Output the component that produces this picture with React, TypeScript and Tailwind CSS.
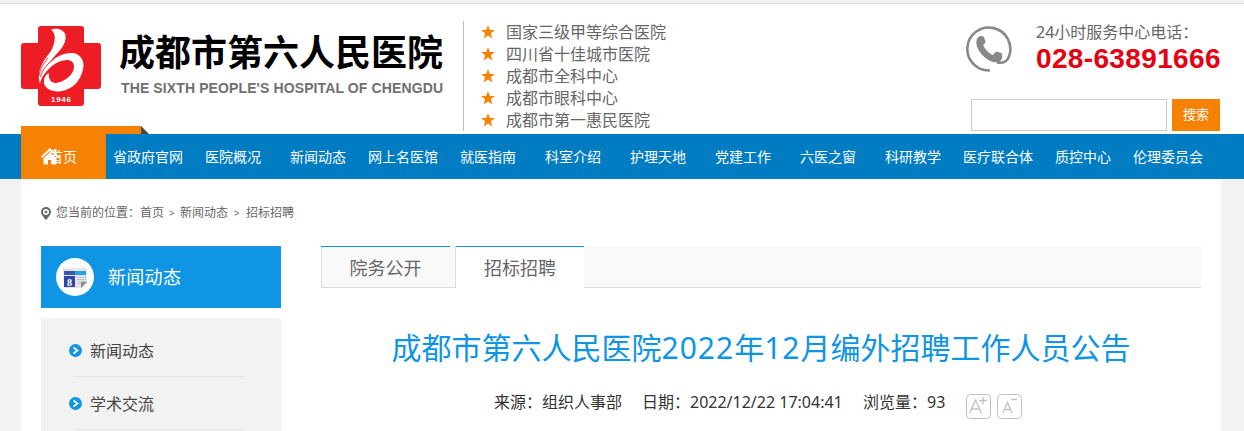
const honors = [
  "国家三级甲等综合医院",
  "四川省十佳城市医院",
  "成都市全科中心",
  "成都市眼科中心",
  "成都市第一惠民医院",
];

const navItems = [
  "省政府官网",
  "医院概况",
  "新闻动态",
  "网上名医馆",
  "就医指南",
  "科室介绍",
  "护理天地",
  "党建工作",
  "六医之窗",
  "科研教学",
  "医疗联合体",
  "质控中心",
  "伦理委员会",
];

const sideItems = ["新闻动态", "学术交流"];

function Logo() {
  return (
    <svg className="mt-[22px] h-20 w-20 shrink-0" viewBox="0 0 80 80">
      <path
        fill="#ee1c24"
        d="M20 0h40q3 0 3 3v14h14q3 0 3 3v40q0 3-3 3H63v14q0 3-3 3H20q-3 0-3-3V63H3q-3 0-3-3V20q0-3 3-3h14V3q0-3 3-3z"
      />
      <path
        fill="#fff"
        d="M30 3.500C35 1.500 43 3 44.500 9C46 19 37 26 32 32L26 39C33 31 43 26.500 52 27C61 28 65 37 61 47C57 59 47 65.500 36 65.500C27 65 22 60 23 54C23.500 51 25 48 28 47C27 53 30 57 35 57C44 56 53 48 53 41C53 31 40 33 31 40C23 47 20 52 19 58C15 44 23 34 30 25C34 17 36 8 30 3.500z"
      />
      <path d="M19.500 51C21 44 26 38 33 33M18 50C19 43 22 38 27 32" fill="none" stroke="#ee1c24" strokeWidth=".9" />
      <text x="40" y="75.500" textAnchor="middle" fontFamily="Liberation Sans" fontWeight="700" fontSize="8" textLength="20" fill="#fff">
        1946
      </text>
    </svg>
  );
}

function Star() {
  return (
    <svg className="mr-[11px] size-[14px]" viewBox="0 0 14 14">
      <path fill="#f58203" d="M7 0l1.800 5H14L9.800 8.200l1.600 5.300L7 10.400l-4.400 3.100 1.600-5.300L0 5h5.200z" />
    </svg>
  );
}

function PhoneIcon() {
  return (
    <svg className="h-[46px] w-[46px]" viewBox="0 0 46 46" fill="none">
      <path d="M24 44.500A21.500 21.500 0 1 1 42.800 31C41 35.500 37 37.500 31 36.500" stroke="#888" strokeWidth="2.600" />
      <path
        fill="#888"
        d="M11 13c1-3 5-4 7-2l1.500 5c0 2-3 2-2 4 2 4 5 7 9 9 2 0 2-4 5-3l4 1c1.500 2 1 8-3 9C23 39 7 23 11 13z"
      />
    </svg>
  );
}

function NewsIcon() {
  return (
    <svg className="h-[38px] w-[38px]" viewBox="0 0 38 38">
      <circle cx="19" cy="19" r="19" fill="#fff" />
      <path fill="#e2e3e4" d="M7 11h24v14l-5 5H8z" />
      <path stroke="#e2e3e4" strokeWidth="1.500" strokeDasharray="2 1" d="M7 10.500h24" />
      <path fill="#3a56b0" d="M8 13h11v4H8z" />
      <path fill="#29a3dd" d="M19 13h11v4H19z" />
      <path fill="#2f45a5" d="M8 18h11v11H8z" />
      <path stroke="#c5c7c9" d="M21 19.500h9M21 21.500h9M21 23.500h9M21 25.500h4" />
      <path fill="#8b8f93" d="M25 30v-6h6z" />
      <text x="13.500" y="27.500" textAnchor="middle" fontFamily="Liberation Serif" fontWeight="700" fontSize="10" fill="#fff">
        8
      </text>
    </svg>
  );
}

function Header() {
  return (
    <header className="h-[130px] bg-white">
      <div className="ml-[21px] flex w-[1200px]">
        <Logo />
        <div className="ml-[18px] w-[344px] pt-[25px]">
          <h1 className="text-[36px] leading-[48px] font-bold whitespace-nowrap text-black">成都市第六人民医院</h1>
          <svg className="mt-[2px] h-5 w-[330px]">
            <text x="2" y="14" fontFamily="Liberation Sans" fontWeight="700" fontSize="14" textLength="322" fill="#707070">
              THE SIXTH PEOPLE'S HOSPITAL OF CHENGDU
            </text>
          </svg>
        </div>
        <ul className="mt-[17px] h-[110px] w-[481px] border-l border-[#bfbfbf] pl-[17px] text-[16px] leading-[22px] text-[#666]">
          {honors.map((h) => (
            <li key={h} className="flex items-center">
              <Star />
              {h}
            </li>
          ))}
        </ul>
        <div className="w-[277px] pt-[17px]">
          <div className="flex pl-[22px]">
            <div className="mt-[5px] w-[70px]">
              <PhoneIcon />
            </div>
            <div className="whitespace-nowrap text-[#666]">
              <p className="text-[16px] leading-[23px]">24小时服务中心电话：</p>
              <p className="font-['Liberation_Sans'] text-[28px] leading-[30px] font-bold tracking-[0.35px] text-[#e60012]">028-63891666</p>
            </div>
          </div>
          <div className="mt-[25px] flex gap-[5px] pl-[27px]">
            <input className="h-8 w-[196px] border border-[#ccc] bg-white" />
            <button className="h-8 w-12 bg-[#f58203] text-[13px] text-white">搜索</button>
          </div>
        </div>
      </div>
    </header>
  );
}

function Nav() {
  return (
    <nav className="flex h-[45px] bg-[#007cc3] pl-[21px] text-[14px] leading-[45px] text-white">
      <div className="relative h-[45px] w-[85px] bg-[#f58203] pl-[28px]">
        <svg className="absolute -top-2 left-0 h-2 w-[128px]" viewBox="0 0 128 8">
          <path fill="#f58203" d="M0 0h120v8H0z" />
          <path fill="#484848" d="M120 0l8 8h-8z" />
        </svg>
        首页
        <svg className="absolute top-[14px] left-5 h-[17px] w-[18px]" viewBox="0 0 18 17" fill="#fff">
          <path d="M9 4.500L15.500 10v6.500H11V12H7v4.500H2.500V10z" />
          <path d="M0 8.500L9 0l9 8.500-1.200 1.300L9 3 1.200 9.800zM13 1h2.500v4L13 3z" />
        </svg>
      </div>
      {navItems.map((item) => (
        <a key={item} className="w-[85px] pr-px text-center whitespace-nowrap">
          {item}
        </a>
      ))}
    </nav>
  );
}

function Sidebar() {
  return (
    <aside className="w-[240px]">
      <div className="flex h-[62px] items-center gap-[14px] bg-[#0f95e3] pl-[15px] text-[18px] text-white">
        <NewsIcon />
        <span className="tracking-[0.3px]">新闻动态</span>
      </div>
      <ul className="mt-[10px] h-[120px] bg-[#f2f2f2] px-7 pt-[6px] text-[16px] text-[#444]">
        {sideItems.map((item) => (
          <li key={item} className="h-[53px]">
            <div className="flex h-[52px] items-center gap-2">
              <svg className="size-[13px]" viewBox="0 0 13 13">
                <circle cx="6.500" cy="6.500" r="6.500" fill="#0f95e3" />
                <path d="M4.500 3.500L8.500 6.500l-4 3" fill="none" stroke="#fff" strokeWidth="1.700" />
              </svg>
              <span className="pt-[2px]">{item}</span>
            </div>
            <div className="mr-[9px] ml-[6px] h-px bg-[#e4e4e4]" />
          </li>
        ))}
      </ul>
    </aside>
  );
}

function Article() {
  return (
    <section className="w-[880px]">
      <div className="flex h-[42px] border-b border-[#ddd] bg-[#f9f9f9] text-[18px] leading-[42px] text-[#666]">
        <div className="h-[42px] w-[135px] border-b border-l border-[#ddd]">
          <div className="-ml-px w-[129px] border-t border-[#0f95e3] text-center">院务公开</div>
        </div>
        <div className="h-[42px] w-[128px] border-t border-[#0f95e3] bg-white text-center shadow-[-1px_0_0_#ddd]">招标招聘</div>
      </div>
      <h2 className="mt-[36px] flex justify-center text-[30px] leading-[48px] whitespace-nowrap text-[#0f95e3]">
        成都市第六人民医院<span className="tracking-[1px]">2022</span>年<span className="tracking-[1px]">12</span>月编外招聘工作人员公告
      </h2>
      <div className="mt-[18px] flex pl-[173px] text-[16px] leading-6 whitespace-nowrap text-[#333]">
        <span className="w-[148px]">来源：组织人事部</span>
        <span className="w-[221px]">日期：2022/12/22 17:04:41</span>
        <span className="w-[103px]">浏览量：93</span>
        <svg className="mt-[4px] h-[25px] w-[56px]" viewBox="0 0 56 25" fill="none" stroke="#c0c0c0">
          <rect x=".5" y=".5" width="24" height="24" rx="4" />
          <rect x="31.500" y=".5" width="24" height="24" rx="4" />
          <path strokeWidth="1.300" d="M3.500 19.500L9.500 6l6 13.500M5.500 15h8M13 6.500h8M17 3v7.500M37 19l4.500-10.500L46 19M38.500 15.500h6M45 5.500h6" />
        </svg>
      </div>
    </section>
  );
}

export default function App() {
  return (
    <div className="h-[431px] w-[1244px] overflow-hidden bg-[#f2f2f2] font-['Noto_Sans','Noto_Sans_CJK_SC',sans-serif]">
      <div className="h-1 border-b border-[#ddd]" />
      <Header />
      <Nav />
      <main className="ml-[21px] h-[252px] w-[1200px] bg-white px-5 pt-[22px]">
        <div className="flex h-[24px] items-center text-[12px] whitespace-nowrap text-[#666]">
          <svg className="mr-[5px] h-[13px] w-[10px]" viewBox="0 0 10 13">
            <path fill="#666" fillRule="evenodd" d="M5 0a5 5 0 0 1 5 5c0 2-3 6-5 8C3 11 0 7 0 5a5 5 0 0 1 5-5zm0 2a3 3 0 1 0 0 6 3 3 0 0 0 0-6z" />
            <circle cx="5" cy="5" r="1.500" fill="#777" />
          </svg>
          <span className="w-[84px]">您当前的位置：</span>
          <span className="w-[29px]">首页</span>
          <span className="w-[11px] text-[10px]">&gt;</span>
          <span className="w-[54px]">新闻动态</span>
          <span className="w-[12px] text-[10px]">&gt;</span>
          <span>招标招聘</span>
        </div>
        <div className="mt-[21px] flex gap-10">
          <Sidebar />
          <Article />
        </div>
      </main>
    </div>
  );
}
